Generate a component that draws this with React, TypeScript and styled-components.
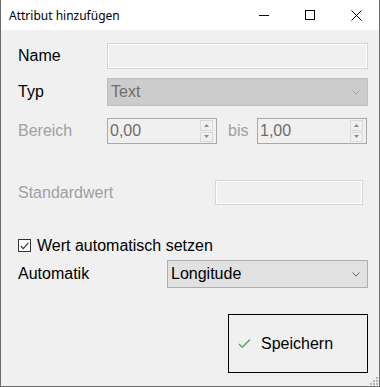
import React from "react";
import styled, { createGlobalStyle } from "styled-components";

const Global = createGlobalStyle`
  html, body { margin: 0; padding: 0; background: #f0f0f0; }
  * { box-sizing: border-box; }
`;

const Window = styled.div`
  position: relative;
  width: 380px;
  height: 387px;
  display: flex;
  flex-direction: column;
  background: #f0f0f0;
  border-left: 1px solid #6b6b6b;
  border-right: 1px solid #6b6b6b;
  border-bottom: 1px solid #6b6b6b;
  font-family: "Liberation Sans", Arial, sans-serif;
  font-size: 16px;
  color: #000;
  overflow: hidden;
`;

const TitleBar = styled.div`
  height: 30px;
  flex: none;
  display: flex;
  align-items: center;
  background: #ffffff;
`;

const Title = styled.div`
  flex: 1;
  padding-left: 8px;
  font-family: "Noto Sans", "Open Sans", sans-serif;
  font-size: 12px;
  color: #000;
`;

const CaptionButton = styled.div`
  width: 46px;
  height: 30px;
  display: flex;
  align-items: center;
  justify-content: center;
`;

const Content = styled.div`
  flex: 1;
  display: flex;
  flex-direction: column;
  padding: 0 11px 0 17px;
`;

const Row = styled.div<{ $top: number; $h: number }>`
  display: flex;
  align-items: center;
  margin-top: ${(p) => p.$top}px;
  height: ${(p) => p.$h}px;
`;

const Label = styled.div<{ $w: number; $disabled?: boolean }>`
  width: ${(p) => p.$w}px;
  flex: none;
  color: ${(p) => (p.$disabled ? "#a0a0a0" : "#000")};
  white-space: nowrap;
`;

const FlatInput = styled.div<{ $w?: number }>`
  ${(p) => (p.$w ? `width: ${p.$w}px; flex: none;` : "flex: 1;")}
  height: 100%;
  border: 1px solid #d6d6d6;
  box-shadow: inset 0 0 0 1px #ffffff;
  background: #f0f0f0;
`;

const Select = styled.div<{ $disabled?: boolean }>`
  flex: 1;
  height: 100%;
  display: flex;
  align-items: center;
  padding-left: 3px;
  padding-right: 7px;
  background: ${(p) => (p.$disabled ? "#cccccc" : "#e1e1e1")};
  border: 1px solid ${(p) => (p.$disabled ? "#bfbfbf" : "#adadad")};
  color: ${(p) => (p.$disabled ? "#6d6d6d" : "#000")};
`;

const SelectText = styled.span`
  flex: 1;
`;

const NumberBox = styled.div`
  width: 110px;
  flex: none;
  height: 100%;
  display: flex;
  align-items: center;
  border: 1px solid #a9a9a9;
  background: #f0f0f0;
  padding: 1px 3px 1px 2px;
  color: #6d6d6d;
`;

const NumberText = styled.span`
  flex: 1;
`;

const Spinner = styled.div`
  width: 13px;
  height: 100%;
  display: flex;
  flex-direction: column;
  gap: 1px;
`;

const SpinButton = styled.div`
  flex: 1;
  display: flex;
  align-items: center;
  justify-content: center;
  border: 1px solid #dadada;
  background: #f0f0f0;
`;

const BisLabel = styled.div`
  width: 40px;
  flex: none;
  padding-left: 11px;
  color: #a0a0a0;
`;

const CheckRow = styled.div`
  display: flex;
  align-items: center;
  gap: 6px;
  margin-top: 32px;
  height: 17px;
`;

const CheckBox = styled.div`
  width: 13px;
  height: 13px;
  flex: none;
  border: 1px solid #333333;
  background: #ffffff;
  display: flex;
  align-items: center;
  justify-content: center;
`;

const ButtonRow = styled.div`
  display: flex;
  justify-content: flex-end;
  margin-top: 26px;
`;

const SaveButton = styled.div`
  width: 140px;
  height: 59px;
  display: flex;
  align-items: center;
  gap: 10px;
  padding-left: 9px;
  border: 1px solid #000;
  background: #f0f0f0;
`;

const Grip = styled.svg`
  position: absolute;
  right: 0;
  bottom: 0;
`;

const Chevron = ({ color }: { color: string }) => (
  <svg width="8" height="5" viewBox="0 0 8 5">
    <path d="M0.5 0.5 L4 4 L7.5 0.5" fill="none" stroke={color} strokeWidth="1" />
  </svg>
);

const Tri = ({ up }: { up?: boolean }) => (
  <svg width="5" height="3" viewBox="0 0 5 3">
    <path d={up ? "M2.5 0 L5 3 L0 3 Z" : "M0 0 L5 0 L2.5 3 Z"} fill="#8a8a8a" />
  </svg>
);

const NumberInput = ({ value }: { value: string }) => (
  <NumberBox>
    <NumberText>{value}</NumberText>
    <Spinner>
      <SpinButton>
        <Tri up />
      </SpinButton>
      <SpinButton>
        <Tri />
      </SpinButton>
    </Spinner>
  </NumberBox>
);

export default function App() {
  return (
    <>
      <Global />
      <Window>
        <TitleBar>
          <Title>Attribut hinzufügen</Title>
          <CaptionButton>
            <svg width="10" height="10" viewBox="0 0 10 10">
              <path d="M0 5.5 H10" stroke="#000" strokeWidth="1" />
            </svg>
          </CaptionButton>
          <CaptionButton>
            <svg width="10" height="10" viewBox="0 0 10 10">
              <rect x="0.5" y="0.5" width="9" height="9" fill="none" stroke="#000" strokeWidth="1" />
            </svg>
          </CaptionButton>
          <CaptionButton>
            <svg width="11" height="11" viewBox="0 0 11 11">
              <path d="M0.5 0.5 L10.5 10.5 M10.5 0.5 L0.5 10.5" stroke="#000" strokeWidth="1" />
            </svg>
          </CaptionButton>
        </TitleBar>
        <Content>
          <Row $top={13} $h={26}>
            <Label $w={89}>Name</Label>
            <FlatInput />
          </Row>
          <Row $top={9} $h={28}>
            <Label $w={89}>Typ</Label>
            <Select $disabled>
              <SelectText>Text</SelectText>
              <Chevron color="#a8a8a8" />
            </Select>
          </Row>
          <Row $top={12} $h={26}>
            <Label $w={89} $disabled>
              Bereich
            </Label>
            <NumberInput value="0,00" />
            <BisLabel>bis</BisLabel>
            <NumberInput value="1,00" />
          </Row>
          <Row $top={36} $h={25}>
            <Label $w={197} $disabled>
              Standardwert
            </Label>
            <FlatInput $w={148} />
          </Row>
          <CheckRow>
            <CheckBox>
              <svg width="9" height="8" viewBox="0 0 9 8">
                <path d="M0.8 4 L3.3 6.6 L8.3 0.8" fill="none" stroke="#333" strokeWidth="1.1" />
              </svg>
            </CheckBox>
            <span>Wert automatisch setzen</span>
          </CheckRow>
          <Row $top={6} $h={28}>
            <Label $w={149}>Automatik</Label>
            <Select>
              <SelectText>Longitude</SelectText>
              <Chevron color="#606060" />
            </Select>
          </Row>
          <ButtonRow>
            <SaveButton>
              <svg width="13" height="11" viewBox="0 0 13 11">
                <path d="M1 6 L4.3 9.3 L12 1.5" fill="none" stroke="#5aa85a" strokeWidth="1.5" />
              </svg>
              <span>Speichern</span>
            </SaveButton>
          </ButtonRow>
        </Content>
        <Grip width="9" height="10" viewBox="0 0 9 10">
          <rect x="6" y="1" width="2" height="2" fill="#b5b5b5" />
          <rect x="3" y="4" width="2" height="2" fill="#b5b5b5" />
          <rect x="6" y="4" width="2" height="2" fill="#b5b5b5" />
          <rect x="0" y="7" width="2" height="2" fill="#b5b5b5" />
          <rect x="3" y="7" width="2" height="2" fill="#b5b5b5" />
          <rect x="6" y="7" width="2" height="2" fill="#b5b5b5" />
        </Grip>
      </Window>
    </>
  );
}
